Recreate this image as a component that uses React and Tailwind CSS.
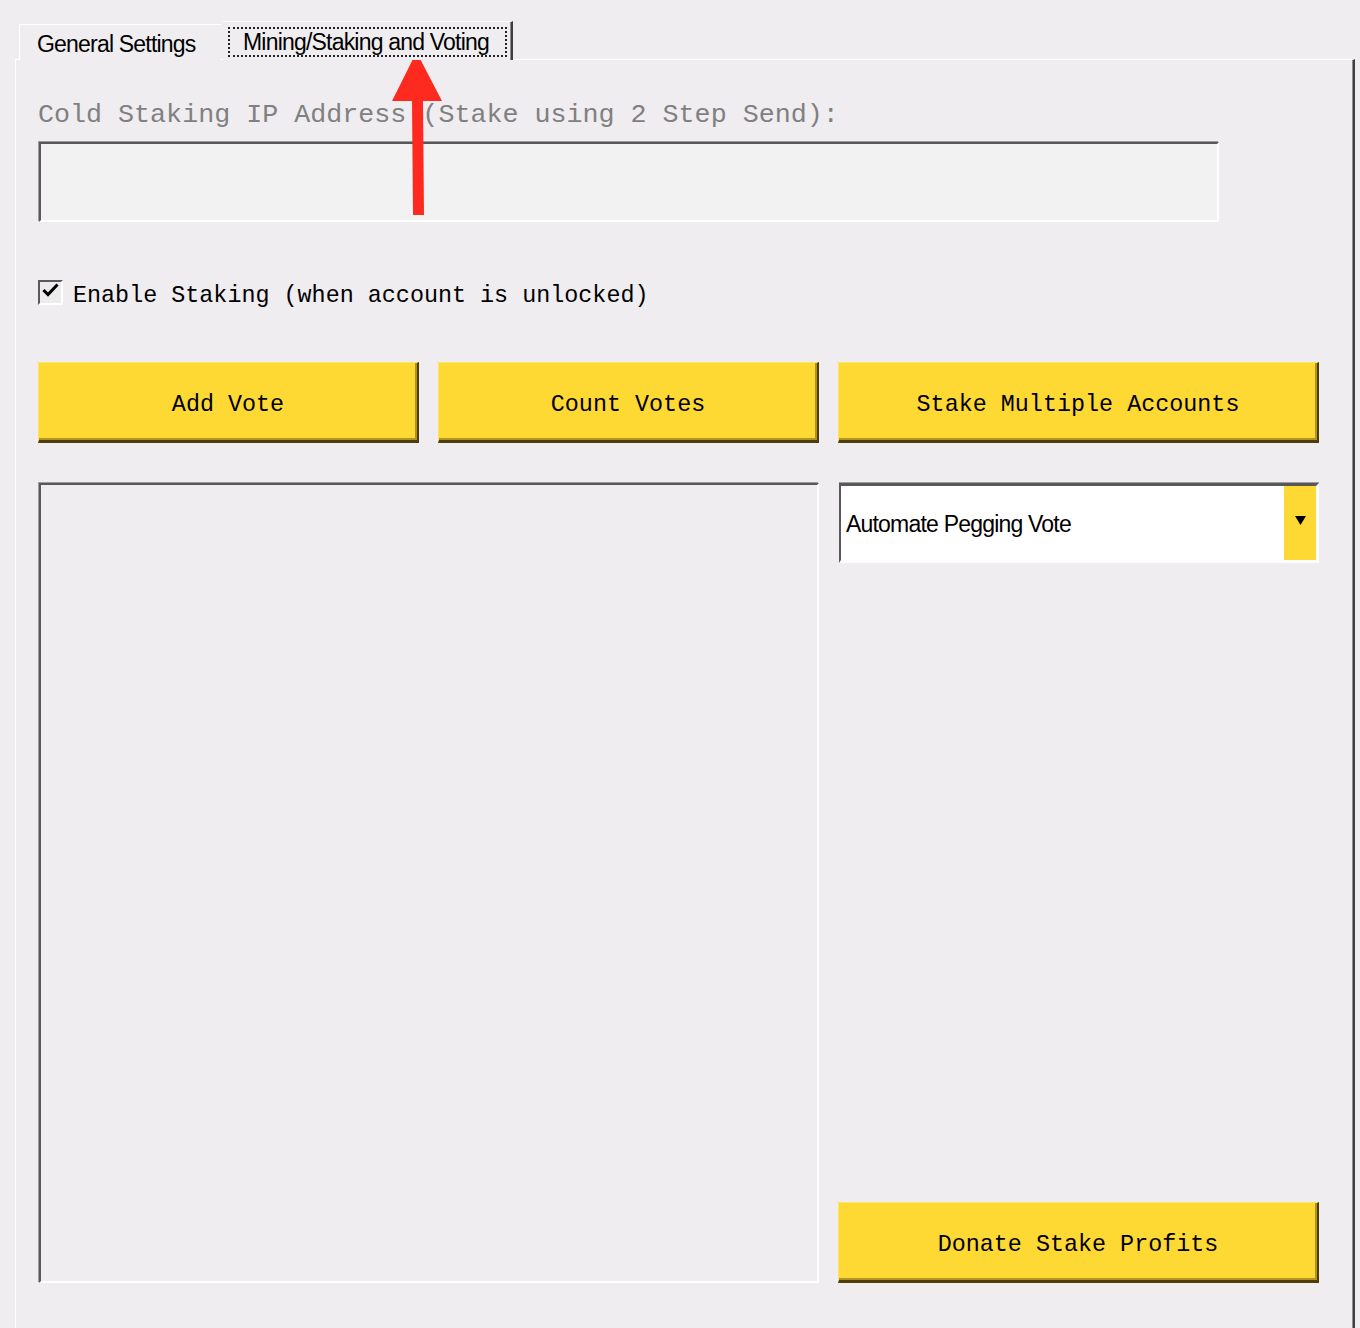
const mono = { fontFamily: '"Liberation Mono", "Courier New", monospace' };
const sans = { fontFamily: '"Liberation Sans", Arial, sans-serif' };

function YellowButton({ label, className = '' }) {
  return (
    <button
      className={`h-[81px] flex items-center justify-center pt-[9px] bg-[#ffd933] border-t border-l border-t-[#ffe566] border-l-[#ffe566] border-r-2 border-b-[3px] border-r-[#4d3d0b] border-b-[#4d3d0b] shadow-[inset_-2px_-2px_0_#b3931f] text-black text-[23.4px] leading-none ${className}`}
      style={mono}
    >
      {label}
    </button>
  );
}

export default function App() {
  return (
    <div className="relative w-[1360px] h-[1328px] overflow-hidden bg-[#efedf0]">
      {/* Tabs */}
      <div className="relative z-10 flex items-end pl-[19px] pt-[21px] -mb-px" style={sans}>
        <div className="h-[36px] w-[202px] bg-[#efedf0] border-t border-l border-white pl-[17px] pt-[6px] text-[23px] tracking-[-0.8px] leading-[26px] text-black">
          General Settings
        </div>
        <div className="ml-[2px] h-[39px] w-[290px] bg-[#efedf0] border-t border-white border-r-2 border-r-[#3f3f3f] shadow-[inset_-1px_0_0_#8c8c8c] pl-[5px] pr-[4px] pt-[5px] pb-[4px]">
          <div className="h-[30px] border-2 border-dotted border-[#222] pl-[13px] text-[23px] tracking-[-0.8px] leading-[26px] text-black">
            Mining/Staking and Voting
          </div>
        </div>
      </div>

      {/* Panel */}
      <div className="ml-[15px] w-[1340px] h-[1300px] border-t border-l border-white border-r-2 border-r-[#3f3f3f] shadow-[inset_-1px_0_0_#8c8c8c] pl-[22px]">
        <div className="mt-[37px] pt-[3px] h-[30px] text-[26.7px] leading-[30px] text-[#808080]" style={mono}>
          Cold Staking IP Address (Stake using 2 Step Send):
        </div>

        <div className="mt-[15px] ml-[1px] w-[1180px] h-[80px] bg-[#f2f2f2] border-2 border-t-[#585858] border-l-[#585858] border-r-white border-b-white shadow-[-1px_-1px_0_#9c9c9c]" />

        <div className="mt-[58px] flex items-start h-[25px]">
          <div className="w-[25px] h-[25px] bg-[#ececec] border-2 border-t-[#5a5a5a] border-l-[#5a5a5a] border-r-white border-b-white flex items-start justify-start">
            <svg width="19" height="17" viewBox="0 0 19 17" className="ml-[2px] mt-[1px]">
              <path d="M2.5 8 L6 11.5 L14.5 2.5" fill="none" stroke="#000" strokeWidth="3" strokeLinecap="square" />
            </svg>
          </div>
          <span className="ml-[10px] pt-[4px] text-[23.4px] leading-[25px] text-black" style={mono}>
            Enable Staking (when account is unlocked)
          </span>
        </div>

        <div className="mt-[57px] flex gap-[19px]">
          <YellowButton label="Add Vote" className="w-[381px]" />
          <YellowButton label="Count Votes" className="w-[381px]" />
          <YellowButton label="Stake Multiple Accounts" className="w-[481px]" />
        </div>

        <div className="mt-[40px] flex gap-[19px] h-[800px]">
          <div className="ml-[1px] w-[780px] h-[800px] border-2 border-t-[#585858] border-l-[#585858] border-r-white border-b-white shadow-[-1px_-1px_0_#9c9c9c]" />
          <div className="w-[481px] flex flex-col justify-between">
            <div className="ml-[1px] h-[80px] bg-white border-t-[3px] border-l-2 border-t-[#585858] border-l-[#585858] border-r-[3px] border-b-[3px] border-r-white border-b-white shadow-[0_-1px_0_#9c9c9c] flex items-stretch">
              <div className="flex-1 flex items-center pl-[5px] pt-[2px] text-[23px] tracking-[-0.8px] text-black" style={sans}>
                Automate Pegging Vote
              </div>
              <div className="w-[32px] bg-[#ffd933] flex items-center justify-center">
                <svg width="11" height="10" viewBox="0 0 11 10" className="-mt-[4px]">
                  <path d="M0 0 H11 L5.5 9 Z" fill="#000" />
                </svg>
              </div>
            </div>
            <YellowButton label="Donate Stake Profits" className="w-[481px]" />
          </div>
        </div>
      </div>

      {/* Red annotation arrow */}
      <svg className="absolute left-[388px] top-[48px]" width="58" height="172" viewBox="0 0 58 172">
        <path d="M28.5 4 L54 53 L35 53 L36 167 L25 167 L24 53 L4 53 Z" fill="#ff2a1f" />
      </svg>
    </div>
  );
}
